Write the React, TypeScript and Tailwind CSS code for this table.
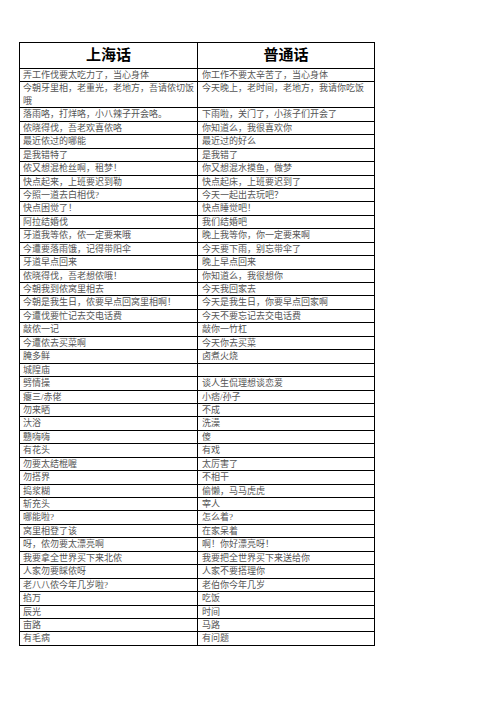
const rows: [string, string][] = [
  ["弄工作伐要太吃力了，当心身体", "你工作不要太辛苦了，当心身体"],
  ["今朝牙里相，老重光，老地方，吾请侬切饭哦", "今天晚上，老时间，老地方，我请你吃饭"],
  ["落雨咯，打烊咯，小八辣子开会咯。", "下雨啦，关门了，小孩子们开会了"],
  ["侬晓得伐，吾老欢喜侬咯", "你知道么，我很喜欢你"],
  ["最近侬过的哪能", "最近过的好么"],
  ["是我错特了", "是我错了"],
  ["侬又想混枪丝啊，租梦！", "你又想混水摸鱼，做梦"],
  ["快点起来，上班要迟到勒", "快点起床，上班要迟到了"],
  ["今照一道去白相伐?", "今天一起出去玩吧？"],
  ["快点困觉了！", "快点睡觉吧！"],
  ["阿拉结婚伐", "我们结婚吧"],
  ["牙道我等侬，侬一定要来哦", "晚上我等你，你一定要来啊"],
  ["今遭要落雨饿，记得带阳伞", "今天要下雨，别忘带伞了"],
  ["牙道早点回来", "晚上早点回来"],
  ["侬晓得伐，吾老想侬哦！", "你知道么，我很想你"],
  ["今朝我到侬窝里相去", "今天我回家去"],
  ["今朝是我生日，侬要早点回窝里相啊！", "今天是我生日，你要早点回家啊"],
  ["今遭伐要忙记去交电话费", "今天不要忘记去交电话费"],
  ["敲侬一记", "敲你一竹杠"],
  ["今遭侬去买菜啊", "今天你去买菜"],
  ["腌多鲜", "卤煮火烧"],
  ["城隍庙", ""],
  ["劈情操", "谈人生侃理想谈恋爱"],
  ["瘪三/赤佬", "小痞/孙子"],
  ["勿来晒", "不成"],
  ["汏浴", "洗澡"],
  ["戆嗨嗨", "傻"],
  ["有花头", "有戏"],
  ["勿要太结棍喔", "太厉害了"],
  ["勿搭界", "不相干"],
  ["捣浆糊", "偷懒，马马虎虎"],
  ["斩充头", "宰人"],
  ["哪能啦?", "怎么着?"],
  ["窝里相登了该", "在家呆着"],
  ["呀，侬勿要太漂亮啊", "啊！你好漂亮呀！"],
  ["我要拿全世界买下来北侬", "我要把全世界买下来送给你"],
  ["人家勿要睬侬呀", "人家不要搭理你"],
  ["老八八侬今年几岁啦?", "老伯你今年几岁"],
  ["掐万", "吃饭"],
  ["辰光", "时间"],
  ["亩路", "马路"],
  ["有毛病", "有问题"],
];

export default function App() {
  return (
    <div className="w-[496px] h-[702px] bg-white pt-[42px] pl-[19px] font-['Liberation_Serif','Noto_Sans_CJK_SC',serif]">
      <div className="w-[356px] border border-black">
        <div className="grid grid-cols-[178px_1fr] h-[26px] border-b border-black">
          <div className="flex items-center justify-center border-r border-black text-[15px] font-bold text-black">
            上海话
          </div>
          <div className="flex items-center justify-center text-[15px] font-bold text-black">
            普通话
          </div>
        </div>
        {rows.map(([sh, pt], i) => (
          <div
            key={i}
            className="grid grid-cols-[178px_1fr] border-b border-black last:border-b-0 text-[9px] leading-[12.44px] text-[#555]"
          >
            <div className="border-r border-black pl-[3px] pr-[2px]">{sh}</div>
            <div className="pl-[4px] pr-[2px]">{pt}</div>
          </div>
        ))}
      </div>
    </div>
  );
}
